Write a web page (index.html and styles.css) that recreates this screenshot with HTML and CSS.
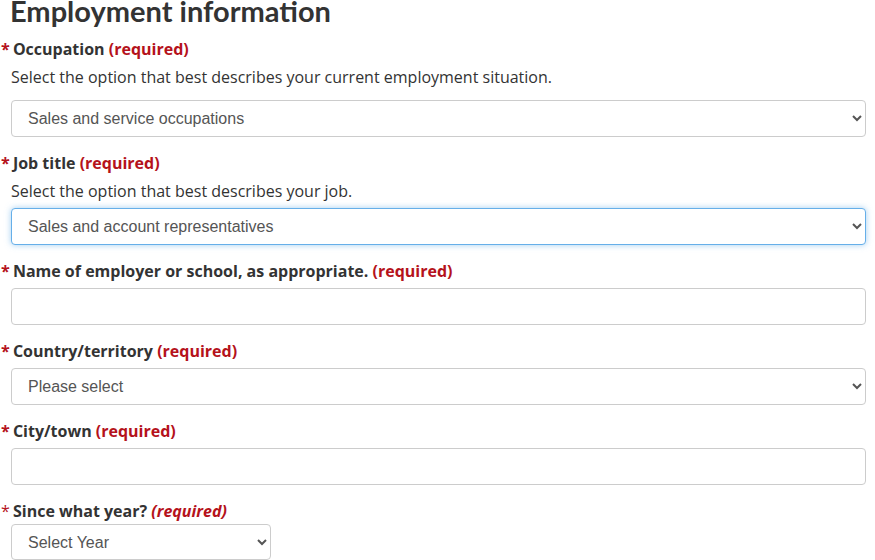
FILE: index.html
```html
<!DOCTYPE html>
<html lang="en">
<head>
<meta charset="utf-8">
<link rel="stylesheet" href="styles.css">
</head>
<body>
<main class="form">
  <h2 class="title">Employment information</h2>

  <div class="field">
    <label class="label"><span class="star">*</span> Occupation <strong class="req">(required)</strong></label>
    <p class="help">Select the option that best describes your current employment situation.</p>
    <select class="control"><option>Sales and service occupations</option></select>
  </div>

  <div class="field">
    <label class="label"><span class="star">*</span> Job title <strong class="req">(required)</strong></label>
    <p class="help near">Select the option that best describes your job.</p>
    <select class="control focus"><option>Sales and account representatives</option></select>
  </div>

  <div class="field">
    <label class="label"><span class="star">*</span> Name of employer or school, as appropriate. <strong class="req">(required)</strong></label>
    <input class="control" type="text">
  </div>

  <div class="field">
    <label class="label"><span class="star">*</span> Country/territory <strong class="req">(required)</strong></label>
    <select class="control"><option>Please select</option></select>
  </div>

  <div class="field">
    <label class="label"><span class="star">*</span> City/town <strong class="req">(required)</strong></label>
    <input class="control" type="text">
  </div>

  <div class="field tight">
    <label class="label"><span class="star thin">*</span> Since what year? <em class="req">(required)</em></label>
    <select class="control short"><option>Select Year</option></select>
  </div>
</main>
</body>
</html>
```
FILE: styles.css
```css
html, body {
  margin: 0;
  padding: 0;
  background: #fff;
}
body {
  font-family: "Open Sans", "Noto Sans", sans-serif;
  color: #333;
}
.form {
  display: flex;
  flex-direction: column;
  padding: 0 9px 0 11px;
}
.title {
  font-family: Lato, sans-serif;
  font-weight: 700;
  font-size: 29px;
  line-height: 29px;
  margin: -4px 0 13px -1px;
  color: #333;
}
.field {
  display: flex;
  flex-direction: column;
  margin-bottom: 15px;
}
.label {
  font-weight: 700;
  font-size: 16px;
  line-height: 22px;
  margin-left: -10px;
  margin-bottom: 6px;
  color: #333;
}
.star {
  color: #b5121b;
  margin-right: -1px;
}
.star.thin { font-weight: 400; }
.req {
  color: #b5121b;
  font-weight: 700;
}
em.req { font-style: italic; }
.help {
  margin: 0 0 12px 0;
  font-size: 16px;
  line-height: 22px;
}
.help.near { margin-bottom: 6px; }
.control {
  box-sizing: border-box;
  width: 100%;
  height: 37px;
  border: 1px solid #ccc;
  border-radius: 4px;
  background: #fff;
  font-family: "Liberation Sans", Arial, sans-serif;
  font-size: 16px;
  color: #555;
  padding: 0 12px;
}
.control.focus {
  border-color: #66afe9;
  box-shadow: 0 0 6px rgba(102, 175, 233, .6);
}
.tight .label { margin-bottom: 2px; }
.short { width: 260px; height: 36px; }
```
